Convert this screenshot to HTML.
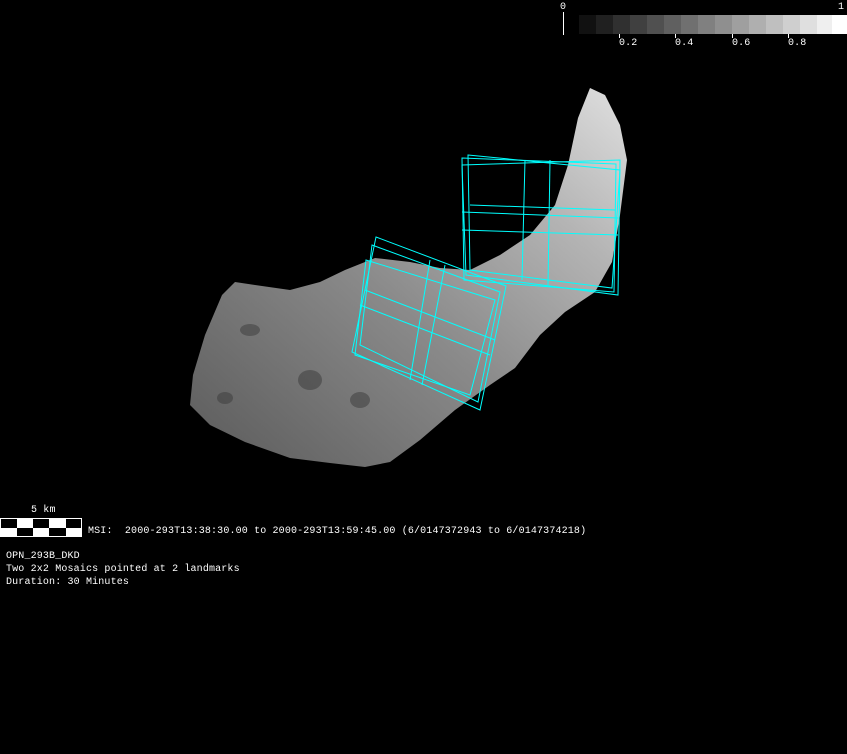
<!DOCTYPE html>
<html><head><style>
html,body{margin:0;padding:0;background:#000;width:847px;height:754px;overflow:hidden}
.t{position:absolute;color:#fff;font-family:"Liberation Mono",monospace;font-size:10px;line-height:13px;white-space:pre;letter-spacing:0.15px}
</style></head><body>
<svg width="847" height="754" style="position:absolute;left:0;top:0">
<defs>
<linearGradient id="g" x1="0" y1="1" x2="1" y2="0">
<stop offset="0" stop-color="#5a5a5a"/>
<stop offset="0.45" stop-color="#8a8a8a"/>
<stop offset="0.75" stop-color="#b4b4b4"/>
<stop offset="1" stop-color="#e0e0e0"/>
</linearGradient>
</defs>
<polygon fill="url(#g)" points="190,405 193,375 205,335 222,295 235,282 255,285 290,290 320,282 345,270 375,258 410,262 440,268 470,270 500,255 530,235 555,205 568,165 578,118 590,88 605,95 620,125 627,160 620,215 612,262 595,292 565,312 540,335 515,368 490,385 455,410 420,440 390,462 365,467 330,463 290,458 245,442 210,425"/>
<g fill="#3a3a3a" opacity="0.5">
<ellipse cx="225" cy="398" rx="8" ry="6"/>
<ellipse cx="310" cy="380" rx="12" ry="10"/>
<ellipse cx="360" cy="400" rx="10" ry="8"/>
<ellipse cx="250" cy="330" rx="10" ry="6"/>
</g>
<g fill="none" stroke="#00ffff" stroke-width="1">
<polygon points="462,158 616,164 614,292 464,280"/>
<polygon points="468,155 620,170 612,288 470,270"/>
<polygon points="462,165 620,160 618,295 466,275"/>
<line x1="525" y1="160" x2="522" y2="280"/><line x1="550" y1="160" x2="548" y2="285"/>
<line x1="462" y1="212" x2="618" y2="218"/><line x1="462" y1="230" x2="618" y2="235"/>
<line x1="470" y1="205" x2="615" y2="210"/>
<polygon points="376,237 506,286 480,410 352,352"/>
<polygon points="372,245 500,292 478,402 360,345"/>
<polygon points="366,260 495,300 470,395 355,355"/>
<line x1="430" y1="260" x2="410" y2="380"/><line x1="445" y1="265" x2="422" y2="385"/>
<line x1="365" y1="290" x2="495" y2="340"/><line x1="360" y1="305" x2="490" y2="355"/>
</g>
<g>
<rect x="579" y="15" width="17" height="19" fill="#111"/>
<rect x="596" y="15" width="17" height="19" fill="#202020"/>
<rect x="613" y="15" width="17" height="19" fill="#303030"/>
<rect x="630" y="15" width="17" height="19" fill="#404040"/>
<rect x="647" y="15" width="17" height="19" fill="#505050"/>
<rect x="664" y="15" width="17" height="19" fill="#606060"/>
<rect x="681" y="15" width="17" height="19" fill="#707070"/>
<rect x="698" y="15" width="17" height="19" fill="#808080"/>
<rect x="715" y="15" width="17" height="19" fill="#8f8f8f"/>
<rect x="732" y="15" width="17" height="19" fill="#9f9f9f"/>
<rect x="749" y="15" width="17" height="19" fill="#afafaf"/>
<rect x="766" y="15" width="17" height="19" fill="#bfbfbf"/>
<rect x="783" y="15" width="17" height="19" fill="#cfcfcf"/>
<rect x="800" y="15" width="17" height="19" fill="#dfdfdf"/>
<rect x="817" y="15" width="15" height="19" fill="#efefef"/>
<rect x="832" y="15" width="15" height="19" fill="#fff"/>
<line x1="563.5" y1="12" x2="563.5" y2="35" stroke="#fff"/>
<line x1="619.5" y1="34" x2="619.5" y2="38" stroke="#fff"/>
<line x1="675.5" y1="34" x2="675.5" y2="38" stroke="#fff"/>
<line x1="732.5" y1="34" x2="732.5" y2="38" stroke="#fff"/>
<line x1="788.5" y1="34" x2="788.5" y2="38" stroke="#fff"/>
</g>
<rect x="0" y="518" width="82" height="19" fill="#fff"/>
<rect x="1" y="519" width="16" height="9" fill="#000"/>
<rect x="33" y="519" width="16" height="9" fill="#000"/>
<rect x="66" y="519" width="15" height="9" fill="#000"/>
<rect x="17" y="528" width="16" height="8" fill="#000"/>
<rect x="49" y="528" width="17" height="8" fill="#000"/>
</svg>
<div class="t" style="left:560px;top:1px">0</div>
<div class="t" style="left:838px;top:1px">1</div>
<div class="t" style="left:619px;top:37px">0.2</div>
<div class="t" style="left:675px;top:37px">0.4</div>
<div class="t" style="left:732px;top:37px">0.6</div>
<div class="t" style="left:788px;top:37px">0.8</div>
<div class="t" style="left:31px;top:504px">5 km</div>
<div class="t" style="left:88px;top:525px">MSI:  2000-293T13:38:30.00 to 2000-293T13:59:45.00 (6/0147372943 to 6/0147374218)</div>
<div class="t" style="left:6px;top:550px">OPN_293B_DKD
Two 2x2 Mosaics pointed at 2 landmarks
Duration: 30 Minutes</div>
</body></html>
